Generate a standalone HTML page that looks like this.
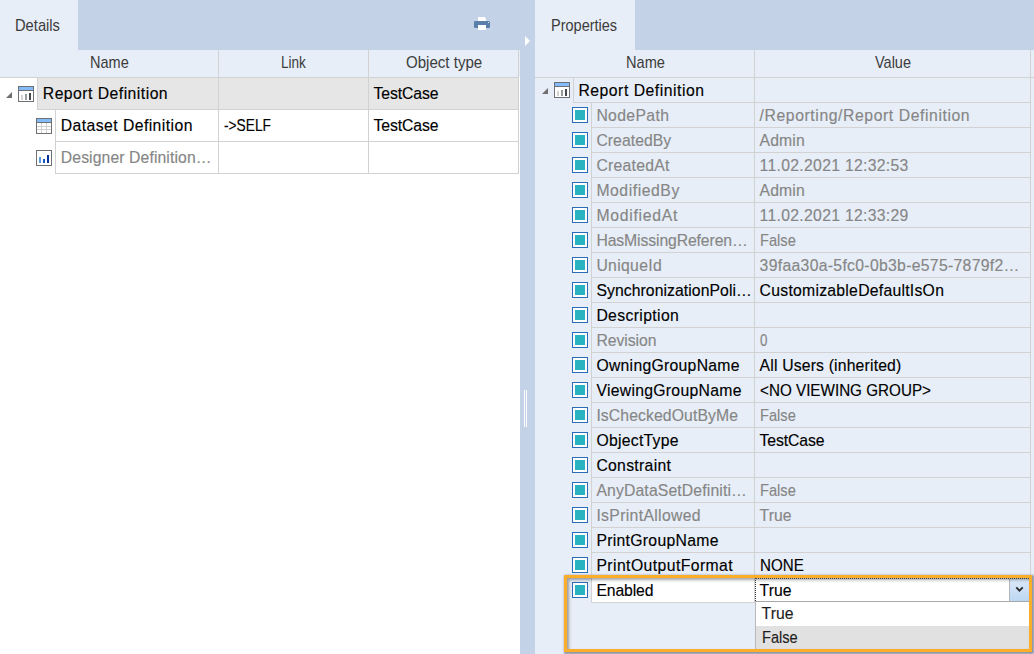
<!DOCTYPE html><html><head><meta charset="utf-8"><title>Details / Properties</title><style>
html,body{margin:0;padding:0}
body{width:1034px;height:654px;position:relative;overflow:hidden;background:#fff;font-family:"Liberation Sans",sans-serif;font-size:15.75px;color:#000}
.a{position:absolute}
.t{position:absolute;white-space:nowrap;transform-origin:0 0;line-height:20px;height:20px;-webkit-text-stroke:0.15px}
.g{color:#868686}
.h{color:#3c3c3c;-webkit-text-stroke:0}
.l{color:#1e1e1e}
.ln{position:absolute;background:#d3d2d2}
.ck{position:absolute;width:16px;height:16px;box-sizing:border-box;border:1px solid #2b6cb8;background:#fff}
.ck i{position:absolute;left:2px;top:2px;width:10px;height:10px;background:#29b3c1}
</style></head><body>
<div class="a" style="left:0;top:0;width:520px;height:50px;background:#c3d2e6"></div>
<div class="a" style="left:0;top:0;width:78px;height:50px;background:#e7eef7"></div>
<div class="a" style="left:0;top:50px;width:520px;height:27px;background:#e7eef7"></div>
<div class="ln" style="left:0;top:77px;width:519px;height:1px"></div>
<div class="a" style="left:37px;top:78px;width:481px;height:31px;background:#e6e6e6"></div>
<div class="ln" style="left:218px;top:50px;width:1px;height:124px"></div>
<div class="ln" style="left:368px;top:50px;width:1px;height:124px"></div>
<div class="ln" style="left:518px;top:50px;width:1px;height:124px"></div>
<div class="ln" style="left:37px;top:109px;width:482px;height:1px"></div>
<div class="ln" style="left:55px;top:141px;width:464px;height:1px"></div>
<div class="ln" style="left:55px;top:173px;width:464px;height:1px"></div>
<div class="ln" style="left:37px;top:78px;width:1px;height:32px"></div>
<div class="ln" style="left:55px;top:110px;width:1px;height:64px"></div>
<div class="a" style="left:520px;top:0;width:15px;height:654px;background:#c3d2e6"></div>
<div class="a" style="left:525px;top:36px;width:0;height:0;border-left:5px solid #fff;border-top:5px solid transparent;border-bottom:5px solid transparent"></div>
<div class="a" style="left:524px;top:390px;width:1px;height:37px;background:#fff"></div>
<div class="a" style="left:526px;top:390px;width:1px;height:37px;background:#fff"></div>
<div class="a" style="left:535px;top:0;width:499px;height:654px;background:#e7eef7"></div>
<div class="a" style="left:635px;top:0;width:399px;height:50px;background:#c3d2e6"></div>
<div class="ln" style="left:535px;top:77px;width:499px;height:1px"></div>
<div class="ln" style="left:754px;top:50px;width:1px;height:553px"></div>
<div class="ln" style="left:1030px;top:50px;width:1px;height:604px"></div>
<div class="ln" style="left:573px;top:78px;width:1px;height:25px"></div>
<div class="ln" style="left:573px;top:102px;width:458px;height:1px"></div>
<div class="ln" style="left:591px;top:103px;width:1px;height:500px"></div>
<div class="ln" style="left:591px;top:127px;width:440px;height:1px"></div>
<div class="ck" style="left:572px;top:107px"><i></i></div>
<div class="ln" style="left:591px;top:152px;width:440px;height:1px"></div>
<div class="ck" style="left:572px;top:132px"><i></i></div>
<div class="ln" style="left:591px;top:177px;width:440px;height:1px"></div>
<div class="ck" style="left:572px;top:157px"><i></i></div>
<div class="ln" style="left:591px;top:202px;width:440px;height:1px"></div>
<div class="ck" style="left:572px;top:182px"><i></i></div>
<div class="ln" style="left:591px;top:227px;width:440px;height:1px"></div>
<div class="ck" style="left:572px;top:207px"><i></i></div>
<div class="ln" style="left:591px;top:252px;width:440px;height:1px"></div>
<div class="ck" style="left:572px;top:232px"><i></i></div>
<div class="ln" style="left:591px;top:277px;width:440px;height:1px"></div>
<div class="ck" style="left:572px;top:257px"><i></i></div>
<div class="ln" style="left:591px;top:302px;width:440px;height:1px"></div>
<div class="ck" style="left:572px;top:282px"><i></i></div>
<div class="ln" style="left:591px;top:327px;width:440px;height:1px"></div>
<div class="ck" style="left:572px;top:307px"><i></i></div>
<div class="ln" style="left:591px;top:352px;width:440px;height:1px"></div>
<div class="ck" style="left:572px;top:332px"><i></i></div>
<div class="ln" style="left:591px;top:377px;width:440px;height:1px"></div>
<div class="ck" style="left:572px;top:357px"><i></i></div>
<div class="ln" style="left:591px;top:402px;width:440px;height:1px"></div>
<div class="ck" style="left:572px;top:382px"><i></i></div>
<div class="ln" style="left:591px;top:427px;width:440px;height:1px"></div>
<div class="ck" style="left:572px;top:407px"><i></i></div>
<div class="ln" style="left:591px;top:452px;width:440px;height:1px"></div>
<div class="ck" style="left:572px;top:432px"><i></i></div>
<div class="ln" style="left:591px;top:477px;width:440px;height:1px"></div>
<div class="ck" style="left:572px;top:457px"><i></i></div>
<div class="ln" style="left:591px;top:502px;width:440px;height:1px"></div>
<div class="ck" style="left:572px;top:482px"><i></i></div>
<div class="ln" style="left:591px;top:527px;width:440px;height:1px"></div>
<div class="ck" style="left:572px;top:507px"><i></i></div>
<div class="ln" style="left:591px;top:552px;width:440px;height:1px"></div>
<div class="ck" style="left:572px;top:532px"><i></i></div>
<div class="ln" style="left:591px;top:577px;width:440px;height:1px"></div>
<div class="ck" style="left:572px;top:557px"><i></i></div>
<div class="ln" style="left:591px;top:602px;width:440px;height:1px"></div>
<div class="ck" style="left:572px;top:582px"><i></i></div>
<svg class="a" style="left:18px;top:86px" width="16" height="16" viewBox="0 0 16 16"><rect x="0.5" y="0.5" width="15" height="15" fill="#fff" stroke="#6d7175"/><rect x="1" y="1" width="14" height="3" fill="#82bbf7"/><rect x="1" y="4" width="14" height="1" fill="#6d7175"/><rect x="3" y="9" width="2" height="5" fill="#d2d2ce"/><rect x="7" y="8" width="2" height="6" fill="#9a9b9b"/><rect x="11" y="7" width="2" height="7" fill="#474b4f"/></svg>
<svg class="a" style="left:6px;top:92px" width="6" height="6" viewBox="0 0 6 6"><path d="M0 6L6 6L6 0Z" fill="#6f6f6f"/></svg>
<svg class="a" style="left:36px;top:118px" width="16" height="16" viewBox="0 0 16 16"><rect x="0.5" y="0.5" width="15" height="15" fill="#fff" stroke="#6d7175"/><rect x="1" y="1" width="14" height="3" fill="#82bbf7"/><rect x="1" y="4" width="14" height="1" fill="#6d7175"/><rect x="5" y="5" width="1" height="10" fill="#cfcfcf"/><rect x="10" y="5" width="1" height="10" fill="#cfcfcf"/><rect x="1" y="8" width="14" height="1" fill="#cfcfcf"/><rect x="1" y="11" width="14" height="1" fill="#cfcfcf"/></svg>
<svg class="a" style="left:36px;top:150px" width="16" height="16" viewBox="0 0 16 16"><rect x="0.5" y="0.5" width="15" height="15" fill="#fff" stroke="#6d7175"/><rect x="3" y="7" width="2" height="6" fill="#5b9bdf"/><rect x="7" y="9" width="2" height="4" fill="#1558c0"/><rect x="11" y="5" width="2" height="8" fill="#04309a"/></svg>
<svg class="a" style="left:554px;top:82px" width="16" height="16" viewBox="0 0 16 16"><rect x="0.5" y="0.5" width="15" height="15" fill="#fff" stroke="#6d7175"/><rect x="1" y="1" width="14" height="3" fill="#82bbf7"/><rect x="1" y="4" width="14" height="1" fill="#6d7175"/><rect x="3" y="9" width="2" height="5" fill="#d2d2ce"/><rect x="7" y="8" width="2" height="6" fill="#9a9b9b"/><rect x="11" y="7" width="2" height="7" fill="#474b4f"/></svg>
<svg class="a" style="left:542px;top:88px" width="6" height="6" viewBox="0 0 6 6"><path d="M0 6L6 6L6 0Z" fill="#6f6f6f"/></svg>
<svg class="a" style="left:472px;top:15px" width="20" height="17" viewBox="0 0 20 17"><path d="M6 2H12.5L14 3.5V7H6Z" fill="#fff"/><rect x="2" y="6" width="16" height="7" rx="1.2" fill="#5a7fab"/><rect x="6" y="10" width="8" height="5" fill="#fff"/><rect x="16" y="7" width="1" height="1" fill="#e8eef6"/></svg>
<div class="a" style="left:592px;top:578px;width:162px;height:24px;background:#fff"></div>
<div class="a" style="left:755px;top:578px;width:255px;height:24px;background:#fff"></div>
<div class="a" style="left:755px;top:578px;width:274px;height:0;border-top:1px dotted #333"></div>
<div class="a" style="left:755px;top:578px;width:0;height:23px;border-left:1px dotted #333"></div>
<div class="a" style="left:1009px;top:579px;width:20px;height:22px;box-sizing:border-box;border-left:1px solid #b4b4b4;background:linear-gradient(#dce9f8,#bcd6f3)"></div>
<svg class="a" style="left:1014px;top:585px" width="11" height="9" viewBox="0 0 11 9"><path d="M2.3 2.4L5.5 5.7L8.7 2.4" fill="none" stroke="#2e2e2e" stroke-width="1.9"/></svg>
<div class="a" style="left:755px;top:601px;width:275px;height:48px;box-sizing:border-box;border-top:1px solid #a8a8a8;border-left:1px solid #b8b8b8;background:#fff"></div>
<div class="a" style="left:756px;top:626px;width:273px;height:23px;background:#e1e1e1"></div>
<div class="a" style="left:564px;top:575px;width:468px;height:77px;box-sizing:border-box;border:3px solid #fcae2b;border-radius:0.5px;box-shadow:1px 1px 2px 0.5px rgba(70,75,90,.55),inset 2px 2px 3px rgba(80,80,80,.5)"></div>
<div class="t h" style="left:14.67px;top:15.5px;transform:scaleX(0.934)">Details</div>
<div class="t h" style="left:89.67px;top:52.5px;transform:scaleX(0.922)">Name</div>
<div class="t h" style="left:280.57px;top:52.5px;transform:scaleX(0.862)">Link</div>
<div class="t h" style="left:405.56px;top:52.5px;transform:scaleX(0.957)">Object type</div>
<div class="t" style="left:42.80px;top:83.5px;letter-spacing:0.47px">Report Definition</div>
<div class="t" style="left:373.60px;top:83.5px;letter-spacing:-0.10px">TestCase</div>
<div class="t" style="left:60.80px;top:115.5px;letter-spacing:0.43px">Dataset Definition</div>
<div class="t" style="left:223.60px;top:115.5px;transform:scaleX(0.872)">-&gt;SELF</div>
<div class="t" style="left:373.60px;top:115.5px;letter-spacing:-0.10px">TestCase</div>
<div class="t g" style="left:60.80px;top:147.5px;letter-spacing:0.10px">Designer Definition…</div>
<div class="t h" style="left:550.67px;top:15.5px;transform:scaleX(0.921)">Properties</div>
<div class="t h" style="left:625.77px;top:52.5px;transform:scaleX(0.926)">Name</div>
<div class="t h" style="left:874.70px;top:52.5px;transform:scaleX(0.920)">Value</div>
<div class="t" style="left:578.40px;top:80.5px;letter-spacing:0.52px">Report Definition</div>
<div class="t g" style="left:596.40px;top:105.5px;letter-spacing:0.35px">NodePath</div>
<div class="t g" style="left:759.60px;top:105.5px;letter-spacing:0.58px">/Reporting/Report Definition</div>
<div class="t g" style="left:596.40px;top:130.5px;letter-spacing:0.05px">CreatedBy</div>
<div class="t g" style="left:759.60px;top:130.5px;letter-spacing:0.11px">Admin</div>
<div class="t g" style="left:596.40px;top:155.5px;letter-spacing:0.25px">CreatedAt</div>
<div class="t g" style="left:759.60px;top:155.5px;letter-spacing:0.30px">11.02.2021 12:32:53</div>
<div class="t g" style="left:596.40px;top:180.5px;letter-spacing:0.55px">ModifiedBy</div>
<div class="t g" style="left:759.60px;top:180.5px;letter-spacing:0.11px">Admin</div>
<div class="t g" style="left:596.40px;top:205.5px;letter-spacing:0.73px">ModifiedAt</div>
<div class="t g" style="left:759.60px;top:205.5px;letter-spacing:0.30px">11.02.2021 12:33:29</div>
<div class="t g" style="left:596.40px;top:230.5px;letter-spacing:-0.11px">HasMissingReferen…</div>
<div class="t g" style="left:759.60px;top:230.5px;transform:scaleX(0.929)">False</div>
<div class="t g" style="left:596.40px;top:255.5px;letter-spacing:0.33px">UniqueId</div>
<div class="t g" style="left:759.60px;top:255.5px;letter-spacing:0.31px">39faa30a-5fc0-0b3b-e575-7879f2…</div>
<div class="t" style="left:596.40px;top:280.5px;letter-spacing:0.07px">SynchronizationPoli…</div>
<div class="t" style="left:759.60px;top:280.5px;letter-spacing:0.26px">CustomizableDefaultIsOn</div>
<div class="t" style="left:596.40px;top:305.5px;letter-spacing:0.36px">Description</div>
<div class="t g" style="left:596.40px;top:330.5px;letter-spacing:-0.04px">Revision</div>
<div class="t g" style="left:759.60px;top:330.5px;transform:scaleX(0.849)">0</div>
<div class="t" style="left:596.40px;top:355.5px;letter-spacing:0.28px">OwningGroupName</div>
<div class="t" style="left:759.60px;top:355.5px;letter-spacing:0.17px">All Users (inherited)</div>
<div class="t" style="left:596.40px;top:380.5px;letter-spacing:0.29px">ViewingGroupName</div>
<div class="t" style="left:759.60px;top:380.5px;transform:scaleX(0.967)">&lt;NO VIEWING GROUP&gt;</div>
<div class="t g" style="left:596.40px;top:405.5px;letter-spacing:0.10px">IsCheckedOutByMe</div>
<div class="t g" style="left:759.60px;top:405.5px;transform:scaleX(0.929)">False</div>
<div class="t" style="left:596.40px;top:430.5px;letter-spacing:0.28px">ObjectType</div>
<div class="t" style="left:759.60px;top:430.5px;letter-spacing:-0.12px">TestCase</div>
<div class="t" style="left:596.40px;top:455.5px;letter-spacing:0.30px">Constraint</div>
<div class="t g" style="left:596.40px;top:480.5px;letter-spacing:0.14px">AnyDataSetDefiniti…</div>
<div class="t g" style="left:759.60px;top:480.5px;transform:scaleX(0.929)">False</div>
<div class="t g" style="left:596.40px;top:505.5px;letter-spacing:0.34px">IsPrintAllowed</div>
<div class="t g" style="left:759.60px;top:505.5px;letter-spacing:0.01px">True</div>
<div class="t" style="left:596.40px;top:530.5px;letter-spacing:0.30px">PrintGroupName</div>
<div class="t" style="left:596.40px;top:555.5px;letter-spacing:0.42px">PrintOutputFormat</div>
<div class="t" style="left:759.60px;top:555.5px;transform:scaleX(0.961)">NONE</div>
<div class="t" style="left:596.40px;top:580.5px;letter-spacing:-0.12px">Enabled</div>
<div class="t" style="left:759.60px;top:580.5px;letter-spacing:0.08px">True</div>
<div class="t l" style="left:761.60px;top:603.5px;letter-spacing:0.05px">True</div>
<div class="t l" style="left:761.60px;top:627.5px;transform:scaleX(0.927)">False</div>
</body></html>
